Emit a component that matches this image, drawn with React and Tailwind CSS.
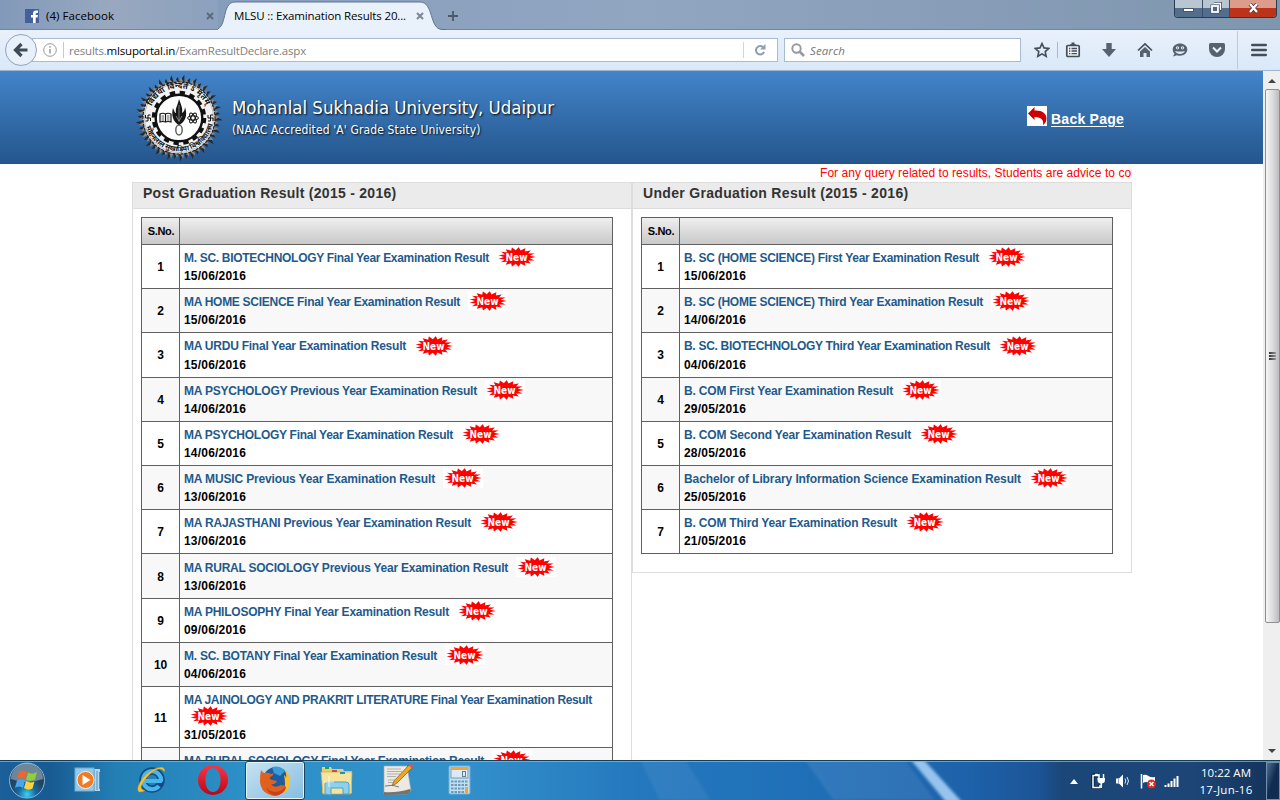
import { useLayoutEffect, useRef, useState } from "react";

// Single line of text spread evenly over a given width.
function Fit({ w, className = "", children }) {
  const ref = useRef(null);
  const [gap, setGap] = useState(0);
  useLayoutEffect(() => {
    const el = ref.current;
    const range = document.createRange();
    range.selectNodeContents(el);
    const natural = range.getBoundingClientRect().width;
    setGap((w - natural) / el.textContent.length);
  }, [w]);
  return (
    <span ref={ref} className={"inline-block whitespace-nowrap " + className} style={{ letterSpacing: gap + "px" }}>
      {children}
    </span>
  );
}

const spikes = (cx, cy, rx, ry, n, inner, vary = 0) =>
  Array.from({ length: n * 2 }, (_, i) => {
    const a = (Math.PI * i) / n + (i % 2 ? 0 : vary);
    const k = i % 2 ? inner : 1 - (i % 4 ? Math.abs(vary) : 0);
    return `${(cx + rx * k * Math.cos(a)).toFixed(2)},${(cy + ry * k * Math.sin(a)).toFixed(2)}`;
  }).join(" ");

const burst = spikes(20, 10, 18.5, 9.8, 17, 0.7);

function NewBadge({ className = "" }) {
  return (
    <span className={"grid h-5 w-10 shrink-0 bg-white " + className}>
      <svg viewBox="0 0 40 20" className="h-5 w-10">
        <polygon points={spikes(20, 10, 19.5, 10, 17, 0.66)} fill="#ff9a9a" opacity=".6" />
        <polygon points={burst} fill="#ff0000" />
        <text x="19.5" y="13.8" textAnchor="middle" fill="#fff" className="font-['DejaVu_Sans',sans-serif] text-[10px] font-bold" textLength="22" lengthAdjust="spacingAndGlyphs">New</text>
      </svg>
    </span>
  );
}

const postGrad = [
  ["M. SC. BIOTECHNOLOGY Final Year Examination Result", "15/06/2016", 305],
  ["MA HOME SCIENCE Final Year Examination Result", "15/06/2016", 276],
  ["MA URDU Final Year Examination Result", "15/06/2016", 222],
  ["MA PSYCHOLOGY Previous Year Examination Result", "14/06/2016", 293],
  ["MA PSYCHOLOGY Final Year Examination Result", "14/06/2016", 269],
  ["MA MUSIC Previous Year Examination Result", "13/06/2016", 251],
  ["MA RAJASTHANI Previous Year Examination Result", "13/06/2016", 287],
  ["MA RURAL SOCIOLOGY Previous Year Examination Result", "13/06/2016", 324],
  ["MA PHILOSOPHY Final Year Examination Result", "09/06/2016", 265],
  ["M. SC. BOTANY Final Year Examination Result", "04/06/2016", 253],
  ["MA JAINOLOGY AND PRAKRIT LITERATURE Final Year Examination Result", "31/05/2016", 408],
  ["MA RURAL SOCIOLOGY Final Year Examination Result", "31/05/2016", 300],
];
const underGrad = [
  ["B. SC (HOME SCIENCE) First Year Examination Result", "15/06/2016", 295],
  ["B. SC (HOME SCIENCE) Third Year Examination Result", "14/06/2016", 299],
  ["B. SC. BIOTECHNOLOGY Third Year Examination Result", "04/06/2016", 306],
  ["B. COM First Year Examination Result", "29/05/2016", 209],
  ["B. COM Second Year Examination Result", "28/05/2016", 227],
  ["Bachelor of Library Information Science Examination Result", "25/05/2016", 337],
  ["B. COM Third Year Examination Result", "21/05/2016", 213],
];

function Row({ row, i }) {
  const [name, date, w] = row;
  const wrap = i === 10;
  const tall = i === 2 || i === 7;
  return (
    <div className={`flex shrink-0 border-t border-[#606060] ${wrap ? "h-[61px]" : tall ? "h-[45px]" : "h-[44px]"} ${i % 2 ? "bg-[#f8f8f8]" : "bg-white"}`}>
      <div className={`flex w-[38px] shrink-0 items-center justify-center border-r border-[#606060] text-[12px] ${i === 2 ? "pb-px" : "pt-px"}`}>
        <Fit w={i > 8 ? 13 : 6.5}>{i + 1}</Fit>
      </div>
      <div className={`min-w-0 grow pl-1 text-[12px] ${i === 7 ? "pt-px" : ""}`}>
        <div className="flex h-[26px] items-center text-[#1f5a8c]">
          <Fit w={w} className="leading-[18px]">{name}</Fit>
          {!wrap && <NewBadge className={i === 2 ? "ml-2" : "mb-[2px] ml-2"} />}
        </div>
        {wrap && <NewBadge className="-mt-[7px] ml-[5px]" />}
        <div className={`leading-[18px] text-black ${wrap ? "mt-0" : i === 2 ? "-mt-[3px]" : "-mt-1"}`}>
          <Fit w={62}>{date}</Fit>
        </div>
      </div>
    </div>
  );
}

function Panel({ title, w, rows, className }) {
  return (
    <section className={"w-[500px] shrink-0 border-x border-t border-[#dddddd] " + className}>
      <h2 className="h-[26px] border-b border-[#dddddd] bg-[#ebebeb] pl-[10px] text-[14px] leading-[20px] font-bold text-[#333]">
        <Fit w={w}>{title}</Fit>
      </h2>
      <div className="mt-2 ml-2 w-[472px] border-x border-b border-[#606060] font-bold">
        <div className="flex h-[27px] border-t border-[#606060] bg-linear-to-b from-[#efefef] to-[#c9c9c9]">
          <div className="flex w-[38px] items-center justify-center border-r border-[#606060] text-[11px] text-black"><Fit w={26.5} className="ml-px">S.No.</Fit></div>
        </div>
        {rows.map((r, i) => <Row key={i} row={r} i={i} />)}
      </div>
    </section>
  );
}

function Emblem() {
  return (
    <svg viewBox="0 0 88 88" className="h-[88px] w-[88px]">
      <polygon points={spikes(44, 44, 43.5, 43.5, 42, 0.82, 0.05)} fill="#25282c" />
      <polygon points={spikes(44, 44, 41, 41, 42, 0.85, -0.03)} fill="#85888c" />
      <circle cx="44" cy="44" r="36" fill="#f2f2f2" stroke="#222" strokeWidth="1.200" strokeDasharray="3 1" />
      <circle cx="44" cy="44" r="34.500" fill="none" stroke="#aaa" strokeWidth=".8" />
      <circle cx="44" cy="44" r="25.500" fill="none" stroke="#111" strokeWidth="3.500" strokeDasharray="5.350 4.660" />
      <circle cx="44" cy="44" r="23.300" fill="#fff" stroke="#111" strokeWidth="2.400" />
      <path id="arcTop" d="M15.5 36 A29.5 29.5 0 0 1 72.5 36" fill="none" />
      <path id="arcBottom" d="M10.5 51 A34.5 34.5 0 0 0 77.5 51" fill="none" />
      <text className="font-['Noto_Sans_Devanagari','Noto_Sans',sans-serif] text-[8px] font-bold" fill="#111">
        <textPath href="#arcTop" startOffset="4" textLength="68">विद्यया विन्दते ऽ मृतम्</textPath>
      </text>
      <text className="font-['Noto_Sans_Devanagari','Noto_Sans',sans-serif] text-[7px] font-bold" fill="#111">
        <textPath href="#arcBottom" startOffset="2" textLength="90">मोहनलाल सुखाड़िया विश्वविद्यालय</textPath>
      </text>
      <g stroke="#111" strokeWidth="1" fill="none">
        <path d="M10.500 41v3h5v3M15.500 41h-2.500v6h-2.500" />
        <path d="M73 41v3h5v3M78 41h-2.500v6h-2.500" />
        <path d="M25 40q3-1.500 5.500 0q2.500-1.500 5.500 0v8q-3-1-5.500 0q-2.500-1-5.500 0zM30.500 40v8" fill="#fff" strokeWidth="1.200" />
        <path d="M26.500 42h2.500M26.500 44h2.500M26.500 46h2.500M32 42h2.500M32 44h2.500M32 46h2.500" strokeWidth=".7" />
        <ellipse cx="58" cy="44" rx="5.500" ry="2.100" />
        <ellipse cx="58" cy="44" rx="5.500" ry="2.100" transform="rotate(60 58 44)" />
        <ellipse cx="58" cy="44" rx="5.500" ry="2.100" transform="rotate(120 58 44)" />
        <ellipse cx="44" cy="56" rx="3.200" ry="5" stroke="#666" strokeWidth="1.500" />
      </g>
      <path d="M44 25C46 31 48 34 47 39C49 38 50 35 50 33C53 42 50 48 44 51C38 48 36 41 38 34C39 37 40 39 41 39C40 34 43 31 44 25Z" fill="#151515" />
      <path d="M44 31v17M41 42l3 5 3-5" stroke="#999" strokeWidth=".8" fill="none" />
    </svg>
  );
}

const ui = "font-['Open_Sans',sans-serif]";

function Browser() {
  return (
    <>
      <div className={"flex h-[29px] shrink-0 justify-between bg-linear-to-r from-[#8198b8] via-[#91a6c1] to-[#7f96af] " + ui}>
        <div className="flex">
          <div className="flex h-[29px] w-[218px] items-center bg-linear-to-r from-[#8299b9] via-[#98a8bf] to-[#8ca1be] pt-[3px] pl-[25px] text-[11.5px] text-black">
            <svg viewBox="0 0 14 14" className="size-[14px]"><rect width="14" height="14" fill="#43609c" /><path d="M8 14V8.500H6V6h2V4.500C8 2.500 9 1.500 11 1.500h2V4h-1.200Q10.700 4 10.700 5v1H13l-.4 2.500h-1.900V14z" fill="#fff" /></svg>
            <Fit w={68} className="ml-[7px]">(4) Facebook</Fit>
            <svg viewBox="0 0 8 8" className="ml-[92px] size-2"><path d="M1 1l6 6M7 1l-6 6" stroke="#5d6b7e" strokeWidth="2" /></svg>
          </div>
          <div className="z-20 grid h-[30px] w-[228px] grid-cols-1 grid-rows-1">
            <svg viewBox="0 0 228 30" className="col-start-1 row-start-1 h-[30px] w-[228px]"><path d="M-3 29.500C10 29 3 2 17 2H202C216 2 211 29 224 29.500L228 31H-3z" fill="#e9f1fb" /><path d="M-3 29.500C10 29 3 2 17 2H202C216 2 211 29 224 29.500H228" fill="none" stroke="#5f7591" /></svg>
            <div className="col-start-1 row-start-1 flex items-center pt-[2px] pl-4 text-[11.5px] text-black">
              <Fit w={172}>MLSU :: Examination Results 20...</Fit>
              <svg viewBox="0 0 8 8" className="ml-[10px] size-2"><path d="M1 1l6 6M7 1l-6 6" stroke="#7b8795" strokeWidth="2" /></svg>
            </div>
          </div>
          <svg viewBox="0 0 10 10" className="mt-[11px] ml-[2px] size-[10px]"><path d="M5 0v10M0 5h10" stroke="#4c5866" strokeWidth="1.800" /></svg>
        </div>
        <div className="mr-[3px] flex h-[18px] w-[103px] overflow-hidden rounded-b-[4px] border border-t-0 border-[#273b52]">
          <div className="flex w-[28px] justify-center border-r border-[#394f69] bg-linear-to-b from-[#b8c6d2] from-45% to-[#536e8d] to-50% pt-[8px]"><span className="h-1 w-[11px] border border-[#4b5568] bg-white" /></div>
          <div className="flex w-[27px] justify-center border-r border-[#394f69] bg-linear-to-b from-[#b8c6d2] from-45% to-[#536e8d] to-50% pt-[2px]">
            <svg viewBox="0 0 12 12" className="size-3"><path d="M4 1h7v7h-1" fill="none" stroke="#45536b" strokeWidth="2.500" /><path d="M4 1.500h6.500V8" fill="none" stroke="#fff" strokeWidth="1.300" /><rect x="2" y="4" width="6" height="6" fill="#506885" stroke="#45536b" strokeWidth="3" /><rect x="2" y="4" width="6" height="6" fill="#506885" stroke="#fff" strokeWidth="1.800" /></svg>
          </div>
          <div className="flex grow justify-center bg-linear-to-b from-[#dd9b8c] from-45% to-[#bd3319] to-50% pt-[3px]">
            <svg viewBox="0 0 11 10" className="h-[10px] w-[11px]"><path d="M2 1l7 8M9 1l-7 8" stroke="#5b3a40" strokeWidth="4" /><path d="M2 1l7 8M9 1l-7 8" stroke="#fff" strokeWidth="2.300" /></svg>
          </div>
        </div>
      </div>
      <div className={"z-10 flex h-[42px] shrink-0 items-center border-t border-b border-t-[#6f87a3] border-b-[#9db5cf] bg-linear-to-b from-[#e9f1fb] to-[#d9e8f8] text-[12px] " + ui}>
        <div className="z-10 ml-[5px] grid size-8 shrink-0 place-items-center rounded-full border border-[#8ea5c0] bg-[#e8f0f9]">
          <svg viewBox="0 0 16 16" className="size-4"><path d="M14.500 8H3M8.500 2L2.500 8l6 6" fill="none" stroke="#3f4c58" strokeWidth="3.200" /></svg>
        </div>
        <div className="-ml-[5px] flex h-6 w-[746px] shrink-0 items-center border border-[#a9bccf] bg-white pl-[10px]">
          <svg viewBox="0 0 14 14" className="size-[14px]"><circle cx="7" cy="7" r="6.300" fill="none" stroke="#999" /><path d="M7 6v4.500M7 3.300v1.500" stroke="#888" strokeWidth="1.300" /></svg>
          <span className="mr-[5px] ml-[6px] h-4 w-px bg-[#c9c9c9]" />
          <Fit w={237} className="pt-px text-[11.5px] text-[#808080]">results.<span className="text-black">mlsuportal.in</span>/ExamResultDeclare.aspx</Fit>
          <span className="ml-auto h-4 w-px bg-[#d0d6dd]" />
          <svg viewBox="0 0 12 12" className="mr-[11px] ml-[10px] size-3"><path d="M9 3.200A4.200 4.200 0 1 0 10 8" fill="none" stroke="#8d9fb3" strokeWidth="2" /><path d="M11.500 0v5.500H6z" fill="#8d9fb3" /></svg>
        </div>
        <div className="ml-[6px] flex h-6 w-[237px] shrink-0 items-center border border-[#a9bccf] bg-white pl-[6px]">
          <svg viewBox="0 0 14 14" className="size-[14px]"><circle cx="5.500" cy="5.500" r="4.200" fill="none" stroke="#9a9a9a" strokeWidth="1.900" /><path d="M8.500 8.500l4.500 4.500" stroke="#9a9a9a" strokeWidth="2.600" /></svg>
          <Fit w={35} className="ml-[5px] pt-px text-[11.5px] text-[#777] italic">Search</Fit>
        </div>
        <svg viewBox="0 0 16 16" className="ml-[13px] size-4 shrink-0"><path d="M8 1.500l2 4.400 4.800.5-3.600 3.200 1 4.700L8 11.900l-4.200 2.400 1-4.700L1.200 6.400 6 5.900z" fill="none" stroke="#434e59" strokeWidth="1.600" /></svg>
        <span className="ml-[7px] h-4 w-px shrink-0 bg-[#aab9ca]" />
        <svg viewBox="0 0 16 16" className="ml-[7px] size-4 shrink-0"><rect x="1.800" y="3.500" width="12.400" height="11" rx="1" fill="#f0f4f9" stroke="#434e59" strokeWidth="1.700" /><path d="M5 3.500V2.200h1.500V.6h3v1.600H11v1.300z" fill="#434e59" /><path d="M4 6.500h1.300M6.500 6.500H12M4 9h1.300M6.500 9H12M4 11.600h1.300M6.500 11.600H12" stroke="#434e59" strokeWidth="1.300" /></svg>
        <svg viewBox="0 0 16 16" className="ml-5 size-4 shrink-0"><path d="M5.300 1h5.400v6H15l-7 8-7-8h4.300z" fill="#56626f" /></svg>
        <svg viewBox="0 0 16 16" className="ml-5 size-4 shrink-0"><path d="M1 8.500L8 2l7 6.500" fill="none" stroke="#434e59" strokeWidth="1.700" /><path d="M3 9.500L8 5l5 4.500V15H9.500v-4h-3v4H3z" fill="#56626f" /></svg>
        <svg viewBox="0 0 16 16" className="ml-[19px] size-4 shrink-0"><path d="M8 1.500c4 0 7.300 2.500 7.300 6S12 13.700 8 13.700c-1 0-2-.1-3-.5L1 14.500l1.500-3C1.300 10.500.7 9 .7 7.500c0-3.500 3.300-6 7.300-6z" fill="#56626f" /><circle cx="5.500" cy="5.800" r="1.600" fill="#dfeaf7" /><circle cx="10.500" cy="5.800" r="1.600" fill="#dfeaf7" /><path d="M5 6h1M10 6h1" stroke="#434e59" /><path d="M3 9q5 1 10 0q-1.500 3-5 3T3 9z" fill="#dfeaf7" /></svg>
        <svg viewBox="0 0 16 16" className="ml-[21px] size-4 shrink-0"><path d="M1.500 1h13Q16 1 16 2.500V7a8 8 0 0 1-16 0V2.500Q0 1 1.500 1z" fill="#56626f" /><path d="M4 5.500l4 4 4-4" fill="none" stroke="#eef4fb" strokeWidth="2" /></svg>
        <span className="ml-3 h-[38px] w-px shrink-0 bg-[#bdcada]" />
        <svg viewBox="0 0 16 14" className="ml-[13px] h-[14px] w-4 shrink-0"><path d="M1.200 2h13.600M1.200 7h13.600M1.200 12h13.600" stroke="#434e59" strokeWidth="2.400" strokeLinecap="round" /></svg>
      </div>
    </>
  );
}

function Scrollbar() {
  return (
    <div className="flex w-[17px] shrink-0 flex-col items-center bg-[#efefef]">
      <svg viewBox="0 0 8 4" className="mt-[8px] h-1 w-2 shrink-0"><path d="M0 4l4-4 4 4z" fill="#444" /></svg>
      <div className="mt-[6px] ml-px grid h-[534px] w-[15px] shrink-0 place-items-center rounded-[2px] border border-[#8e8e8e] bg-linear-to-r from-[#f6f6f6] via-[#dcdcde] to-[#bcbdc0]">
        <div className="flex w-[7px] flex-col gap-px">
          <span className="h-[2px] bg-linear-to-r from-[#333] to-[#999]" /><span className="h-[2px] bg-linear-to-r from-[#333] to-[#999]" /><span className="h-[2px] bg-linear-to-r from-[#333] to-[#999]" />
        </div>
      </div>
      <svg viewBox="0 0 8 4" className="mt-auto mb-[7px] h-1 w-2 shrink-0"><path d="M0 0l4 4 4-4z" fill="#444" /></svg>
    </div>
  );
}

function Taskbar() {
  return (
    <footer className={"grid h-10 shrink-0 grid-cols-1 grid-rows-1 " + ui}>
      <svg viewBox="0 0 1280 40" className="col-start-1 row-start-1 h-10 w-full">
        <defs>
          <linearGradient id="bar">
            <stop offset="0" stopColor="#1b5f9b" /><stop offset=".04" stopColor="#185b92" /><stop offset=".09" stopColor="#237fb4" /><stop offset=".2" stopColor="#2d91c9" />
            <stop offset=".36" stopColor="#3390ca" /><stop offset=".5" stopColor="#2478be" /><stop offset=".62" stopColor="#1f70b8" /><stop offset=".75" stopColor="#1d63ac" />
            <stop offset=".81" stopColor="#1c5597" /><stop offset=".83" stopColor="#1b4679" /><stop offset=".93" stopColor="#1d4677" /><stop offset="1" stopColor="#123158" />
          </linearGradient>
          <filter id="soft"><feGaussianBlur stdDeviation="1.800" /></filter>
          <radialGradient id="orb" cy=".9"><stop stopColor="#39d6f7" /><stop offset=".5" stopColor="#17699f" /><stop offset="1" stopColor="#204563" /></radialGradient>
        </defs>
        <rect width="1280" height="40" fill="url(#bar)" />
        <path d="M640 0h45l25 40h-50z" fill="#fff" opacity=".06" filter="url(#soft)" />
        <path d="M805 0h100l30 40H833z" fill="#fff" opacity=".08" filter="url(#soft)" />
        <path d="M911 0h13l38 42h-16z" fill="#a4cff5" opacity=".9" filter="url(#soft)" />
        <path d="M0 1.500h1280" stroke="#87bfe0" opacity=".7" /><path d="M0 .5h1280" stroke="#153f58" />
      </svg>
      <div className="col-start-1 row-start-1 flex items-center">
        <svg viewBox="0 0 38 38" className="ml-2 size-[38px]">
          <circle cx="19" cy="19.500" r="17.500" fill="url(#orb)" stroke="#8bb7d2" /><path d="M3 18a16 16 0 0 1 32 0q-16 6-32 0z" fill="#fff" opacity=".35" />
          <path d="M11 11q4-3 8 0l-2 7q-4-2-8 0z" fill="#f2642a" /><path d="M20 11.500q4 2.500 9-.5l-2 7.500q-5 2.500-9 0z" fill="#8fcf3b" /><path d="M9 19.500q4-2.500 8 0l-2 7.500q-4-3-8 0z" fill="#48a7eb" /><path d="M18 20q4 2.500 8.500.5l-2 7q-4 2.500-8.500-.5z" fill="#fdd13f" />
        </svg>
        <svg viewBox="0 0 28 26" className="ml-[28px] h-[26px] w-7"><rect x="3" y="2" width="23" height="22" fill="#b7d5e9" /><path d="M20 3v21M23 4v19M25.500 5v17" stroke="#4f93c1" /><rect x="1" y="1" width="19" height="23" fill="#97c8e8" stroke="#6badd5" /><circle cx="11.500" cy="13" r="8.500" fill="#f27a20" stroke="#fff" strokeWidth=".8" /><path d="M8.500 8l8 5-8 5z" fill="#fff" /></svg>
        <svg viewBox="0 0 34 32" className="ml-8 h-8 w-[34px]">
          <circle cx="18" cy="16" r="9" fill="none" stroke="#124a87" strokeWidth="7.500" /><path d="M28 17H11M27 17.500A9 9 0 1 0 25 22" fill="none" stroke="#49b7ec" strokeWidth="4.200" />
          <path d="M30.500 8C32 1 23 2 14 9S1 28 6 28q3 0 5-1.500Q6 26 7.500 21.500T17 9Q27 1.500 30.500 8z" fill="#f4c333" stroke="#c28e1b" strokeWidth=".4" />
        </svg>
        <svg viewBox="0 0 32 32" className="ml-[29px] size-8"><defs><linearGradient id="op" x2="0" y2="1"><stop stopColor="#ff3442" /><stop offset="1" stopColor="#b70718" /></linearGradient></defs><path fillRule="evenodd" d="M16 1a15 15 0 1 0 0 30a15 15 0 0 0 0-30zm0 3c5 0 7.500 5.500 7.500 12s-2.500 12-7.500 12S8.500 22.500 8.500 16 11 4 16 4z" fill="url(#op)" /></svg>
        <div className="ml-4 grid h-[39px] w-[60px] place-items-center self-end rounded-[3px] border border-[#18455d] bg-linear-to-br from-[#c9e2f2] to-[#83bde0] shadow-[inset_0_0_0_1px_#e3f3fc]">
          <svg viewBox="0 0 32 32" className="size-8"><circle cx="17" cy="15" r="13" fill="#1e5c9f" /><path d="M13 2q8-2 13 4l-5 5-6-3z" fill="#3b9cda" /><path d="M25 4q7 6 6 14t-8 11q3-5 3-10t-1-9q2 1 2 3 1-4-2-9z" fill="#f9bf2c" /><path d="M2 5q1 2 3 3 4-1 7 1l3-1q-1 3-4 4-1 2 2 3l5 1q-2 4-6 3 3 5 10 1l4 1q0 4-3 7-7 5-14 1Q2 26 1 17 1 10 2 5z" fill="#e2601b" /><path d="M7 22q6 8 16 3l4-4q0 6-7 9-9 3-13-8z" fill="#c9401b" /></svg>
        </div>
        <svg viewBox="0 0 34 32" className="ml-[15px] h-8 w-[34px]"><path d="M2 3h9l1 2h11l1 2h8v22H2z" fill="#e8ce72" /><path d="M1 8h31l-1 22H3z" fill="#f6e49d" stroke="#c9a94d" strokeWidth=".7" /><rect x="5" y="3" width="4" height="2" fill="#25a244" /><rect x="12" y="6" width="5" height="2" fill="#d44a25" /><rect x="20" y="8" width="5" height="2" fill="#248ad1" /><path d="M5 30V20q0-2 2-2h19q3 0 3 3v9h-6v-6H11v7z" fill="#8fd0ea" stroke="#4ba3cb" /><path d="M9 12v11M4 18h10" stroke="#fff" strokeWidth=".8" /></svg>
        <svg viewBox="0 0 32 32" className="ml-7 size-8"><path d="M2 2h23l4 25-4 3H2z" fill="#ece9e2" stroke="#aaa" strokeWidth=".6" /><path d="M2 28q12 1 26-3l1 2-3 3-24 1z" fill="#77736b" /><path d="M5 5h14M5 7.500h15M5 10h13M5 12.500h9M6 16h7M6 18.500h5" stroke="#b1b1b1" /><path d="M12 17L27 1l3 3L15 19l-5 3z" fill="#f2a51f" stroke="#87551a" strokeWidth=".7" /><path d="M27 1l1.500-1L32 2l-2 3z" fill="#d65a54" /><path d="M3 22q8-2 14 1" stroke="#777" fill="none" /></svg>
        <svg viewBox="0 0 24 30" className="ml-[34px] h-[30px] w-6"><rect x="1" y="1" width="21" height="28" rx="1" fill="#c2e0f3" stroke="#6faed5" /><rect x="3" y="2.500" width="17" height="10.500" fill="#dceaf7" stroke="#7899b8" /><rect x="3" y="2" width="17" height="3" fill="#f6a331" /><rect x="14.500" y="6.500" width="3" height="5" fill="none" stroke="#647c96" /><path d="M3 16.500h17M3 20h17M3 23.500h17M3 27h17" stroke="#6e9ab9" strokeWidth="2" strokeDasharray="2.500 1" /><rect x="17" y="22" width="3" height="6" fill="#f6a331" /></svg>
        <svg viewBox="0 0 8 5" className="mt-[3px] ml-auto h-[5px] w-2"><path d="M0 5l4-5 4 5z" fill="#fff" /></svg>
        <svg viewBox="0 0 16 16" className="mt-[2px] ml-[13px] size-4"><path d="M6 2.500H2v12h7v-3M6 2.500V1H4v1" fill="none" stroke="#0b2340" strokeWidth="3.500" /><path d="M8 2.500H2v12h7v-2.500M4 1.500h3" fill="none" stroke="#fff" strokeWidth="1.500" /><path d="M8 1v5M12.500 1v5" stroke="#fff" strokeWidth="1.500" /><path d="M6.500 5H14v2q0 3-3 3.500V15h-1.500v-4.500Q6.500 10 6.500 7z" fill="#fff" /></svg>
        <svg viewBox="0 0 16 16" className="mt-[2px] ml-2 size-4"><path d="M1 5.500h3L8 1.500v13l-4-4H1z" fill="#fff" /><path d="M3.500 6v4" stroke="#94a8bd" /><path d="M10 5.500q1.500 2.500 0 5M12 4q3 4 0 8" fill="none" stroke="#dbe7f3" /></svg>
        <svg viewBox="0 0 16 16" className="mt-[2px] ml-[9px] size-4"><path d="M1.500 1v14.500" stroke="#fff" strokeWidth="1.500" /><path d="M3 2q3-1 5.500 1T15 4v7q-3 1-6-1T3 10z" fill="#fff" /><circle cx="11.500" cy="11" r="4.500" fill="#dc2a20" /><path d="M9.500 9l4 4M13.500 9l-4 4" stroke="#fff" strokeWidth="1.500" /></svg>
        <svg viewBox="0 0 16 14" className="mt-[2px] ml-2 h-[14px] w-4"><path d="M1.500 13v-2M4.500 13V9.500M7.500 13V7M10.500 13V4.500M13.500 13V2" stroke="#fff" strokeWidth="2" /></svg>
        <div className="mt-px ml-[18px] flex w-[56px] flex-col items-center text-[11.5px] leading-[17px] text-white"><Fit w={50}>10:22 AM</Fit><Fit w={53}>17-Jun-16</Fit></div>
        <div className="ml-[12px] h-[38px] w-[14px] self-end border border-[#7290ad] bg-linear-to-br from-[#526f91] to-[#102d51] to-50%" />
      </div>
    </footer>
  );
}

export default function App() {
  return (
    <div className="flex h-[800px] w-[1280px] flex-col overflow-hidden bg-white font-['Liberation_Sans',Arial,sans-serif]">
      <Browser />
      <div className="flex min-h-0 grow">
        <main className="flex min-w-0 grow flex-col overflow-hidden">
          <header className="flex h-[93px] shrink-0 items-center bg-linear-to-b from-[#4384ca] to-[#24568c] text-white">
            <div className="ml-[135px]"><Emblem /></div>
            <div className="mt-px ml-[9px] font-['DejaVu_Sans_Condensed','DejaVu_Sans',sans-serif] [font-stretch:condensed]">
              <div className="text-[18.5px] leading-[24px] [text-shadow:1px_1px_2px_#000]"><Fit w={322}>Mohanlal Sukhadia University, Udaipur</Fit></div>
              <div className="text-[12px] leading-[20px] [text-shadow:1px_1px_2px_#000]"><Fit w={248.5}>(NAAC Accredited 'A' Grade State University)</Fit></div>
            </div>
            <a className="mr-[139px] ml-auto flex items-center">
              <svg viewBox="0 0 20 20" className="mb-[3px] size-5 bg-white"><path d="M1 7.500L7.500 1v3.500C15 4 19.500 7.500 19.500 12.500c0 3-1.500 5-3.500 6.500 .8-4-.5-8-8.500-8V14z" fill="#cc0000" /></svg>
              <Fit w={73} className="mt-[2px] ml-1 text-[14px] leading-[18px] font-bold underline underline-offset-2">Back Page</Fit>
            </a>
          </header>
          <div className="ml-[132px] h-[18px] w-[1000px] shrink-0 overflow-hidden pl-[688px] text-[12px] leading-[18px] whitespace-nowrap">
            <Fit w={318} className="text-[#f00]">For any query related to results, Students are advice to con</Fit>
          </div>
          <div className="ml-[132px] flex min-h-0 w-[1000px] shrink-0 items-start">
            <Panel title="Post Graduation Result (2015 - 2016)" w={253.5} rows={postGrad} className="h-[700px]" />
            <Panel title="Under Graduation Result (2015 - 2016)" w={265.5} rows={underGrad} className="h-[391px] border-b" />
          </div>
        </main>
        <Scrollbar />
      </div>
      <Taskbar />
    </div>
  );
}
